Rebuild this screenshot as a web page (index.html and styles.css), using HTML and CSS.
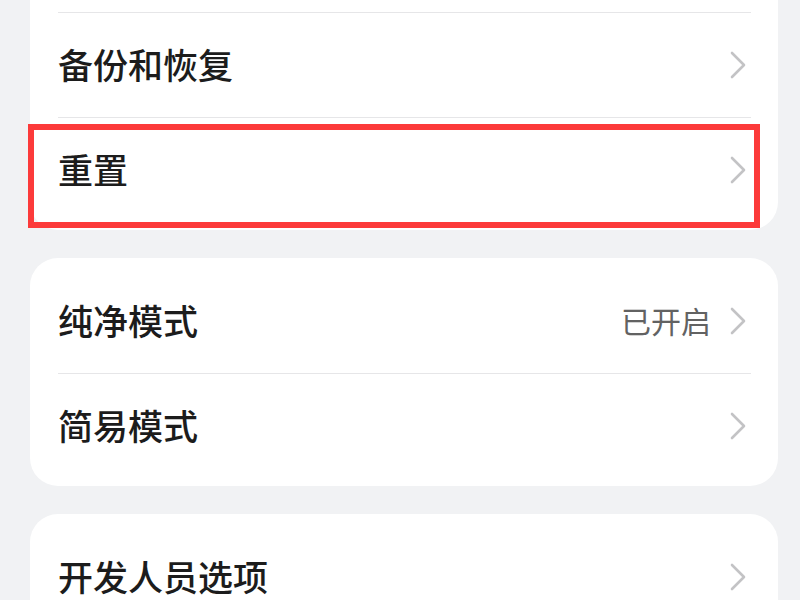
FILE: index.html
```html
<!DOCTYPE html>
<html lang="zh-CN">
<head>
<meta charset="utf-8">
<link rel="stylesheet" href="styles.css">
</head>
<body>
<main class="page">
  <section class="card card-cut">
    <div class="row">
      <span class="label">备份和恢复</span>
      <span class="trail"><svg class="chev" viewBox="0 0 16 28"><path d="M2 2 L14 14 L2 26"/></svg></span>
    </div>
    <div class="row highlight">
      <span class="label">重置</span>
      <span class="trail"><svg class="chev" viewBox="0 0 16 28"><path d="M2 2 L14 14 L2 26"/></svg></span>
      <span class="mark"></span>
    </div>
  </section>
  <section class="card">
    <div class="row first">
      <span class="label">纯净模式</span>
      <span class="trail"><span class="value">已开启</span><svg class="chev" viewBox="0 0 16 28"><path d="M2 2 L14 14 L2 26"/></svg></span>
    </div>
    <div class="row">
      <span class="label">简易模式</span>
      <span class="trail"><svg class="chev" viewBox="0 0 16 28"><path d="M2 2 L14 14 L2 26"/></svg></span>
    </div>
  </section>
  <section class="card">
    <div class="row first">
      <span class="label">开发人员选项</span>
      <span class="trail"><svg class="chev" viewBox="0 0 16 28"><path d="M2 2 L14 14 L2 26"/></svg></span>
    </div>
  </section>
</main>
</body>
</html>
```

FILE: styles.css
```css
html, body {
  margin: 0;
  padding: 0;
  background: #f1f2f4;
  overflow: hidden;
  height: 600px;
}
.page {
  display: flex;
  flex-direction: column;
  gap: 28px;
  font-family: "Noto Sans CJK SC", "Noto Sans", sans-serif;
}
.card {
  background: #ffffff;
  border-radius: 28px;
  margin: 0 22px 0 30px;
  padding: 10px 27px 8px 28px;
}
.card-cut {
  margin-top: -40px;
  padding-top: 52px;
  padding-bottom: 8px;
}
.row {
  position: relative;
  height: 105px;
  box-sizing: border-box;
  border-top: 1px solid #e6e6e8;
  display: flex;
  align-items: center;
  justify-content: space-between;
}
.row.first {
  border-top: none;
}
.label {
  font-size: 35px;
  font-weight: 500;
  color: #1c1c1c;
  line-height: 1;
  padding-bottom: 3px;
}
.trail {
  display: flex;
  align-items: center;
  gap: 19px;
  padding-right: 5px;
}
.value {
  font-size: 30px;
  color: #626262;
  line-height: 1;
  padding-bottom: 2px;
}
.chev {
  width: 16px;
  height: 28px;
  fill: none;
  stroke: #c3c3c5;
  stroke-width: 2.6;
  stroke-linecap: round;
  stroke-linejoin: round;
}
.mark {
  position: absolute;
  left: -30px;
  right: -9px;
  top: 6px;
  bottom: -6px;
  border: 6.5px solid #fc3a3a;
  pointer-events: none;
}
```
